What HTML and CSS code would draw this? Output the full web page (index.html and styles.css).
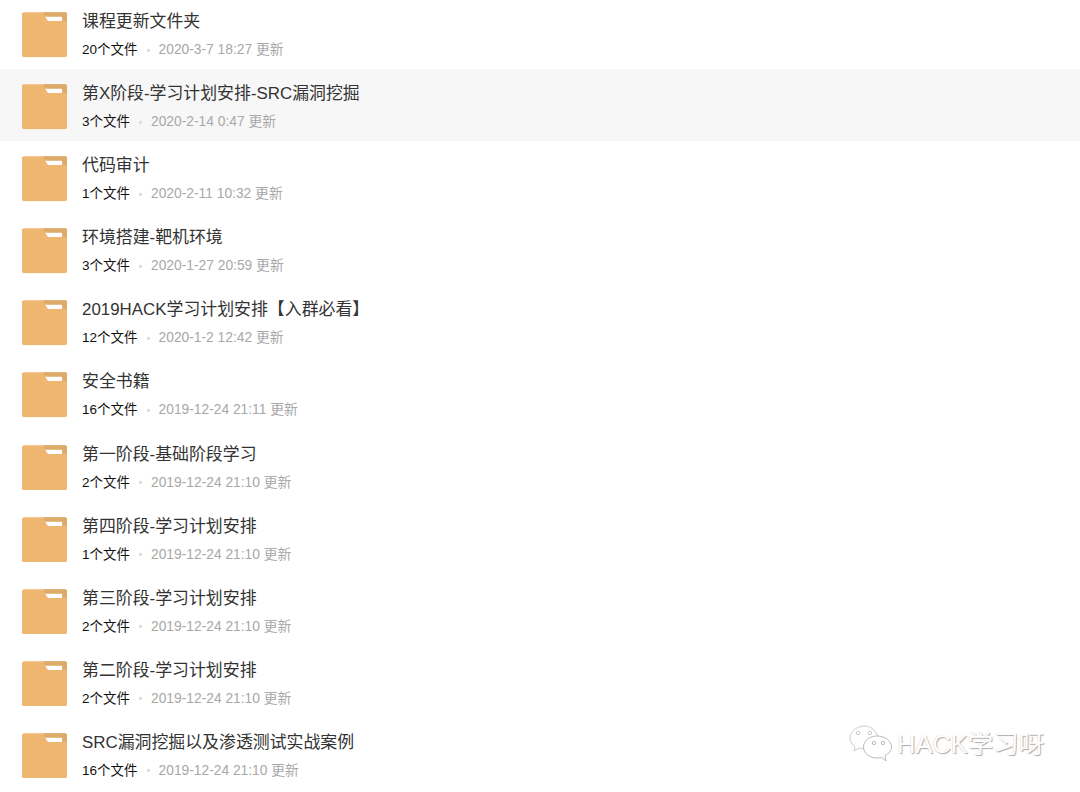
FILE: index.html
```html
<!DOCTYPE html>
<html lang="zh-CN">
  <head>
    <meta charset="UTF-8" />
    <title>文件夹</title>
    <link rel="stylesheet" href="styles.css">
  </head>
  <body>
    <svg width="0" height="0" class="defs">
      <symbol id="folder" viewBox="0 0 46 46">
        <rect width="46" height="46" rx="2" fill="#efb671" />
        <path d="M22 0H44a2 2 0 0 1 2 2V9H26Z" fill="#dcaa69" />
        <path d="M23.500 4.500H41V9H26.500Z" fill="#fff" />
      </symbol>
    </svg>
    <main class="list">
      <article class="row">
        <svg class="folder"><use href="#folder" /></svg>
        <div class="info">
          <h2 class="name">课程更新文件夹</h2>
          <p class="meta"><span class="count">20个文件</span><i class="dot"></i><span class="date">2020-3-7 18:27 更新</span></p>
        </div>
      </article>
      <article class="row current">
        <svg class="folder"><use href="#folder" /></svg>
        <div class="info">
          <h2 class="name">第X阶段-学习计划安排-SRC漏洞挖掘</h2>
          <p class="meta"><span class="count">3个文件</span><i class="dot"></i><span class="date">2020-2-14 0:47 更新</span></p>
        </div>
      </article>
      <article class="row">
        <svg class="folder"><use href="#folder" /></svg>
        <div class="info">
          <h2 class="name">代码审计</h2>
          <p class="meta"><span class="count">1个文件</span><i class="dot"></i><span class="date">2020-2-11 10:32 更新</span></p>
        </div>
      </article>
      <article class="row">
        <svg class="folder"><use href="#folder" /></svg>
        <div class="info">
          <h2 class="name">环境搭建-靶机环境</h2>
          <p class="meta"><span class="count">3个文件</span><i class="dot"></i><span class="date">2020-1-27 20:59 更新</span></p>
        </div>
      </article>
      <article class="row">
        <svg class="folder"><use href="#folder" /></svg>
        <div class="info">
          <h2 class="name">2019HACK学习计划安排【入群必看】</h2>
          <p class="meta"><span class="count">12个文件</span><i class="dot"></i><span class="date">2020-1-2 12:42 更新</span></p>
        </div>
      </article>
      <article class="row">
        <svg class="folder"><use href="#folder" /></svg>
        <div class="info">
          <h2 class="name">安全书籍</h2>
          <p class="meta"><span class="count">16个文件</span><i class="dot"></i><span class="date">2019-12-24 21:11 更新</span></p>
        </div>
      </article>
      <article class="row">
        <svg class="folder"><use href="#folder" /></svg>
        <div class="info">
          <h2 class="name">第一阶段-基础阶段学习</h2>
          <p class="meta"><span class="count">2个文件</span><i class="dot"></i><span class="date">2019-12-24 21:10 更新</span></p>
        </div>
      </article>
      <article class="row">
        <svg class="folder"><use href="#folder" /></svg>
        <div class="info">
          <h2 class="name">第四阶段-学习计划安排</h2>
          <p class="meta"><span class="count">1个文件</span><i class="dot"></i><span class="date">2019-12-24 21:10 更新</span></p>
        </div>
      </article>
      <article class="row">
        <svg class="folder"><use href="#folder" /></svg>
        <div class="info">
          <h2 class="name">第三阶段-学习计划安排</h2>
          <p class="meta"><span class="count">2个文件</span><i class="dot"></i><span class="date">2019-12-24 21:10 更新</span></p>
        </div>
      </article>
      <article class="row">
        <svg class="folder"><use href="#folder" /></svg>
        <div class="info">
          <h2 class="name">第二阶段-学习计划安排</h2>
          <p class="meta"><span class="count">2个文件</span><i class="dot"></i><span class="date">2019-12-24 21:10 更新</span></p>
        </div>
      </article>
      <article class="row">
        <svg class="folder"><use href="#folder" /></svg>
        <div class="info">
          <h2 class="name">SRC漏洞挖掘以及渗透测试实战案例</h2>
          <p class="meta"><span class="count">16个文件</span><i class="dot"></i><span class="date">2019-12-24 21:10 更新</span></p>
        </div>
      </article>
    </main>
    <div class="watermark">
      <svg class="wechat" width="44" height="38" viewBox="0 0 44 38">
        <path d="M16 1C8 1 1 6.500 1 13c0 3.500 2 6.500 5 8.500L5 26l5.500-3c2 .6 3.500.8 5.500.8M29 12.500C27.500 6 22 1 16 1" fill="#fff" stroke="#ccc" stroke-width="1" />
        <path d="M28 11c-7.500 0-13.500 5-13.500 11S20.500 33 28 33c1.600 0 3-.2 4.500-.7L37 36l-1-5.500c4-2 6.500-5 6.500-8.500 0-6-6.500-11-14.500-11Z" fill="#fff" stroke="#bbb" stroke-width="1" />
        <circle cx="9" cy="8" r="1.700" fill="#fff" stroke="#bbb" stroke-width=".8" />
        <circle cx="21" cy="8" r="1.700" fill="#fff" stroke="#bbb" stroke-width=".8" />
        <circle cx="25" cy="18" r="1.700" fill="#fff" stroke="#aaa" stroke-width=".8" />
        <circle cx="34" cy="18" r="1.700" fill="#fff" stroke="#aaa" stroke-width=".8" />
      </svg>
      <span class="mark-text">HACK学习呀</span>
    </div>
  </body>
</html>
```

FILE: styles.css
```css
* {
  box-sizing: border-box;
}
body {
  margin: 0;
  height: 792px;
  overflow: hidden;
  background-color: #fff;
  font-family: "Liberation Sans", "Noto Sans CJK SC", sans-serif;
}
.defs {
  display: block;
  height: 0;
}
.list {
  margin-top: -3px;
}
.row {
  display: flex;
  align-items: flex-start;
  height: 72.100px;
  padding: 13px 0 0 21.500px;
  gap: 15.500px;
}
.current {
  background-color: #f7f7f7;
}
.folder {
  width: 45px;
  height: 45.500px;
  margin-top: 2px;
  flex: none;
}
.name {
  margin: 0 0 7px;
  font-size: 16.900px;
  font-weight: normal;
  line-height: 24px;
  color: #333;
}
.meta {
  display: flex;
  align-items: center;
  margin: 0;
  line-height: 18px;
}
.count {
  font-size: 13.500px;
  color: #111;
}
.dot {
  width: 3px;
  height: 3px;
  margin: 0 9px 0 9px;
  border-radius: 1px;
  background-color: #dcdcdc;
}
.date {
  font-size: 13.800px;
  color: #a8a8a8;
}
.watermark {
  position: absolute;
  left: 849px;
  top: 725px;
  display: flex;
  align-items: center;
  gap: 4px;
}
.mark-text {
  font-size: 25.500px;
  line-height: 38px;
  color: #fff;
  text-shadow: 1px 1px 1px #aaa, -0.500px -0.500px 0 #ddd;
}
```
